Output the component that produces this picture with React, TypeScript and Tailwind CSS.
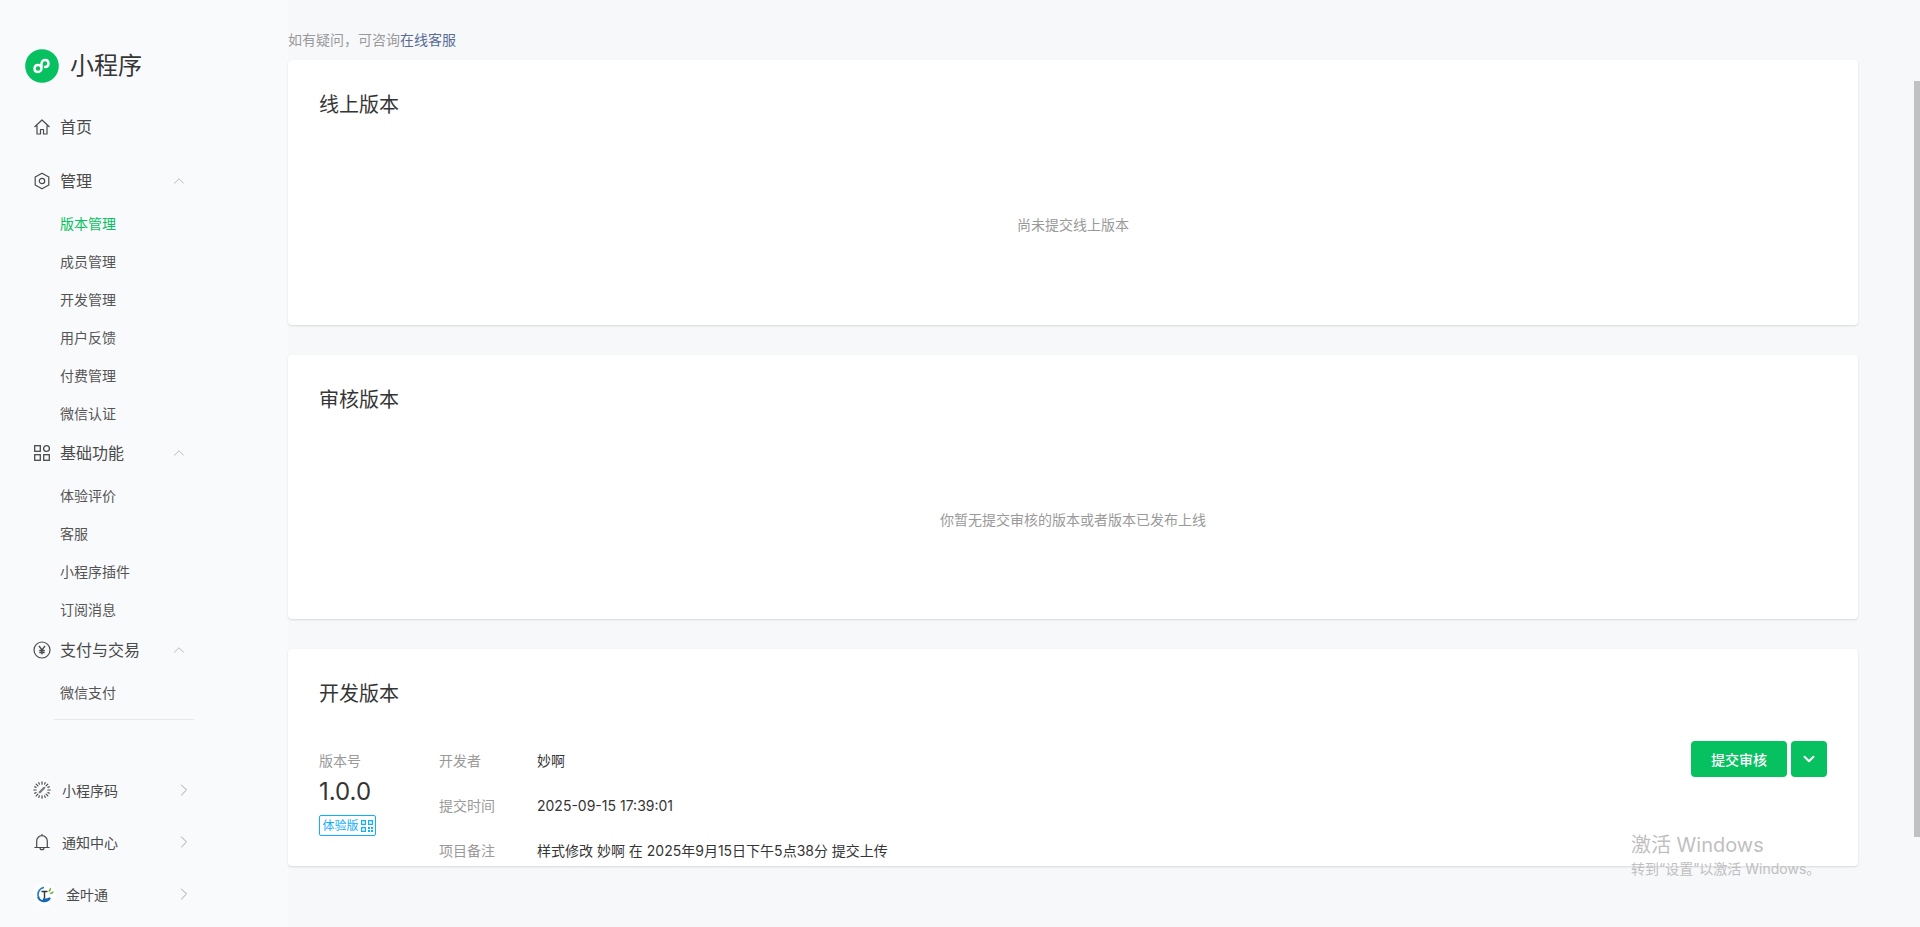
import { ChevronDown, ChevronRight, ChevronUp } from "lucide-react";
import type { ReactNode } from "react";

const FONT = "font-['Inter','Noto_Sans_CJK_SC',sans-serif]";

function HomeIcon() {
  return (
    <svg width="18" height="18" viewBox="0 0 18 18" fill="none" stroke="#4a4a4a" strokeWidth="1.2">
      <path d="M1.5 9 9 2l7.500 7M4 7.500V16h3.500v-4.500h3V16H14V7.500" strokeLinejoin="round" />
    </svg>
  );
}

function HexIcon() {
  return (
    <svg width="18" height="18" viewBox="0 0 18 18" fill="none" stroke="#4a4a4a" strokeWidth="1.2">
      <path d="M9 1.200 15.800 5v8L9 16.800 2.200 13V5z" strokeLinejoin="round" />
      <circle cx="9" cy="9" r="2.700" />
    </svg>
  );
}

function GridIcon() {
  return (
    <svg width="18" height="18" viewBox="0 0 18 18" fill="none" stroke="#4a4a4a" strokeWidth="1.300">
      <rect x="1.700" y="1.700" width="5.600" height="5.600" />
      <circle cx="13.500" cy="4.500" r="2.900" />
      <rect x="1.700" y="10.700" width="5.600" height="5.600" />
      <rect x="10.700" y="10.700" width="5.600" height="5.600" />
    </svg>
  );
}

function YenIcon() {
  return (
    <svg width="18" height="18" viewBox="0 0 18 18" fill="none" stroke="#4a4a4a" strokeWidth="1.200">
      <circle cx="9" cy="9" r="8" />
      <path d="M6 5l3 4 3-4M9 9v4.500M6.300 9.500h5.400M6.300 11.500h5.400" strokeWidth="1.300" />
    </svg>
  );
}

function CodeIcon() {
  return (
    <svg width="18" height="18" viewBox="0 0 18 18" fill="none" stroke="#4a4a4a" strokeWidth="1.200" strokeLinecap="round">
      <path d="M9 .8v2.400M9 14.800v2.400M.8 9h2.400M14.800 9h2.400M3.200 3.200l1.700 1.700M13.100 13.100l1.700 1.700M3.200 14.800l1.700-1.700M13.100 4.900l1.700-1.700M5.800 1.600l.6 1.500M11.600 14.900l.6 1.500M1.600 12.200l1.500-.6M14.900 6.400l1.500-.6M12.200 1.600l-.6 1.500M6.400 14.900l-.6 1.500M1.600 5.800l1.500.6M14.900 11.600l1.500.6" />
      <path d="M6.800 11.200 11.200 6.800" strokeWidth="2.200" stroke="#777" />
    </svg>
  );
}

function BellIcon() {
  return (
    <svg width="18" height="18" viewBox="0 0 18 18" fill="none" stroke="#4a4a4a" strokeWidth="1.200">
      <path d="M1.800 14.500h14.400M3.700 14.500V8a5.300 5.300 0 0 1 10.600 0v6.500M7 14.700a2 2 0 0 0 4 0M9 2.700V1.400" strokeLinecap="round" />
    </svg>
  );
}

function LeafLogo() {
  return (
    <div className="flex h-[23px] w-[23px] items-center justify-center rounded-full bg-white">
      <svg width="23" height="23" viewBox="0 0 23 23" fill="none">
        <path d="M6 15a7 7 0 0 1 5-10.500" stroke="#1b7fc4" strokeWidth="1.600" />
        <path d="M5 14c2 5 9 6 12 1-3 2-5 2-7 1" stroke="#1268b3" strokeWidth="2" />
        <path d="M15.500 9.500c0-3 1.500-4.500 2.500-5 .5 2-.5 4-2.500 5zM16.500 11c1-2 3-2.500 4.500-2.500-.5 2-2.500 3-4.500 2.500z" fill="#7ab648" />
        <path d="M8.500 8.500h6M11.500 8.500v7" stroke="#333" strokeWidth="1.400" />
      </svg>
    </div>
  );
}

function MenuGroup({ icon, title, items, active }: { icon: ReactNode; title: string; items: string[]; active?: string }) {
  return (
    <div>
      <div className="mb-[2px] flex h-[42px] items-center pl-[33px] pr-[100px]">
        <span className="flex w-[27px] shrink-0">{icon}</span>
        <span className="flex-1 text-[16px] whitespace-nowrap text-[#4a4a4a]">{title}</span>
        <ChevronUp className="h-[18px] w-[18px] shrink-0 text-[#b3b3b3]" strokeWidth={1.2} />
      </div>
      {items.map((item) => (
        <div
          key={item}
          className={`flex h-[38px] items-center pl-[60px] text-[14px] ${
            item === active ? "text-[#07c160]" : "text-[#555555]"
          }`}
        >
          {item}
        </div>
      ))}
    </div>
  );
}

function BottomLink({ icon, label, offset }: { icon: ReactNode; label: string; offset?: boolean }) {
  return (
    <div className="flex h-[52px] items-center pl-[33px] pr-[94px]">
      <span className={offset ? "flex w-[33px] shrink-0" : "flex w-[29px] shrink-0"}>{icon}</span>
      <span className="flex-1 text-[14px] text-[#4a4a4a]">{label}</span>
      <ChevronRight className="h-[20px] w-[20px] shrink-0 text-[#a6a6a6]" strokeWidth={1.2} />
    </div>
  );
}

function Card({ title, children, className }: { title: string; children: ReactNode; className: string }) {
  return (
    <section className={`rounded-[4px] bg-white px-[31px] pt-[30px] shadow-[0_1px_2px_rgba(150,150,150,0.3)] ${className}`}>
      <h2 className="text-[20px] leading-[30px] font-normal text-[#353535]">{title}</h2>
      {children}
    </section>
  );
}

function EmptyHint({ text }: { text: string }) {
  return <div className="flex h-[208px] items-center justify-center text-[14px] text-[#9a9a9a]">{text}</div>;
}

function InfoRow({ label, value }: { label: string; value: string }) {
  return (
    <div className="flex h-[45px] items-center text-[14px]">
      <span className="w-[98px] text-[#9a9a9a]">{label}</span>
      <span className="text-[#353535]">{value}</span>
    </div>
  );
}

export default function App() {
  return (
    <div className={`relative flex h-[927px] overflow-hidden bg-[#f7f8fa] ${FONT}`}>
      <aside className="flex w-[288px] shrink-0 flex-col bg-[#f9fafc] pt-[49px]">
        <div className="mb-[24px] flex h-[33px] items-center pl-[25px]">
          <svg width="34" height="34" viewBox="0 0 34 34" fill="none">
            <circle cx="17" cy="17" r="16.800" fill="#07c160" />
            <path
              d="M9.500 19.500c0-2 1.500-3.500 3.500-3.500 1.800 0 3.500 1.500 3.500 3.500V14.500c0-2 1.600-3.500 3.500-3.500 2 0 3.500 1.500 3.500 3.500s-1.500 3.500-3.500 3.500M12.500 16M16.500 19.500c0 2-1.600 3.500-3.500 3.500-2 0-3.500-1.500-3.500-3.500"
              stroke="#ffffff"
              strokeWidth="2.400"
              strokeLinecap="round"
            />
          </svg>
          <span className="ml-[11px] text-[24px] text-[#353535]">小程序</span>
        </div>

        <nav className="h-[640px] overflow-hidden">
          <div className="mb-[12px] flex h-[42px] items-center pl-[33px]">
            <span className="flex w-[27px] shrink-0">
              <HomeIcon />
            </span>
            <span className="text-[16px] text-[#4a4a4a]">首页</span>
          </div>
          <MenuGroup
            icon={<HexIcon />}
            title="管理"
            active="版本管理"
            items={["版本管理", "成员管理", "开发管理", "用户反馈", "付费管理", "微信认证"]}
          />
          <MenuGroup icon={<GridIcon />} title="基础功能" items={["体验评价", "客服", "小程序插件", "订阅消息"]} />
          <div className="pt-px">
            <MenuGroup icon={<YenIcon />} title="支付与交易" items={["微信支付"]} />
          </div>
          <div className="ml-[54px] mt-[8px] h-px w-[140px] bg-[#e5e7ea]" />
          <div className="mt-[22px] pl-[60px] text-[14px] text-[#e8e9eb]">交易组件</div>
        </nav>

        <div className="mt-[18px]">
          <BottomLink icon={<CodeIcon />} label="小程序码" />
          <BottomLink icon={<BellIcon />} label="通知中心" />
          <BottomLink icon={<LeafLogo />} label="金叶通" offset />
        </div>
      </aside>

      <main className="flex flex-1 flex-col pt-[30px] pr-[62px]">
        <p className="mb-[10px] text-[14px] leading-[20px] text-[#9a9a9a]">
          如有疑问，可咨询<span className="text-[#576b95]">在线客服</span>
        </p>
        <Card title="线上版本" className="mb-[30px] h-[265px]">
          <EmptyHint text="尚未提交线上版本" />
        </Card>
        <Card title="审核版本" className="mb-[30px] h-[264px]">
          <EmptyHint text="你暂无提交审核的版本或者版本已发布上线" />
        </Card>
        <Card title="开发版本" className="h-[217px]">
          <div className="mt-[29px] flex">
            <div className="w-[120px]">
              <div className="flex h-[45px] items-center text-[14px] text-[#9a9a9a]">版本号</div>
              <div className="-mt-[6px] text-[24px] leading-[30px] text-[#353535]">1.0.0</div>
              <div className="mt-[8px] flex h-[21px] w-[57px] items-center justify-center gap-[2px] rounded-[2px] border border-[#10aeff] text-[12px] text-[#10aeff]">
                体验版
                <svg width="12" height="12" viewBox="0 0 12 12" fill="#10aeff">
                  <path d="M0 0h5v5H0zM1.200 1.200v2.600h2.600V1.200zM7 0h5v5H7zM8.200 1.200v2.600h2.600V1.200zM0 7h5v5H0zM1.200 8.200v2.600h2.600V8.200zM7 7h2v2H7zM10 7h2v2h-2zM7 10h2v2H7zM10 10h2v2h-2z" />
                </svg>
              </div>
            </div>
            <div className="flex-1">
              <InfoRow label="开发者" value="妙啊" />
              <InfoRow label="提交时间" value="2025-09-15 17:39:01" />
              <InfoRow label="项目备注" value="样式修改 妙啊 在 2025年9月15日下午5点38分 提交上传" />
            </div>
            <div className="mt-[3px] flex gap-[4px]">
              <button className="flex h-[36px] w-[96px] items-center justify-center rounded-[4px] bg-[#07c160] text-[14px] font-medium text-white">
                提交审核
              </button>
              <button className="flex h-[36px] w-[36px] items-center justify-center rounded-[4px] bg-[#07c160] text-white">
                <ChevronDown className="h-[18px] w-[18px]" strokeWidth={2.6} />
              </button>
            </div>
          </div>
        </Card>
      </main>

      {/* page scrollbar thumb */}
      <div className="absolute top-[81px] right-0 h-[756px] w-[6px] bg-[#c1c1c1]" />

      {/* activation watermark */}
      <div className="pointer-events-none absolute top-[830px] left-[1631px] text-[#bfbfbf]">
        <div className="text-[20px] leading-[30px]">激活 Windows</div>
        <div className="text-[14px] leading-[18px]">转到“设置”以激活 Windows。</div>
      </div>
    </div>
  );
}
